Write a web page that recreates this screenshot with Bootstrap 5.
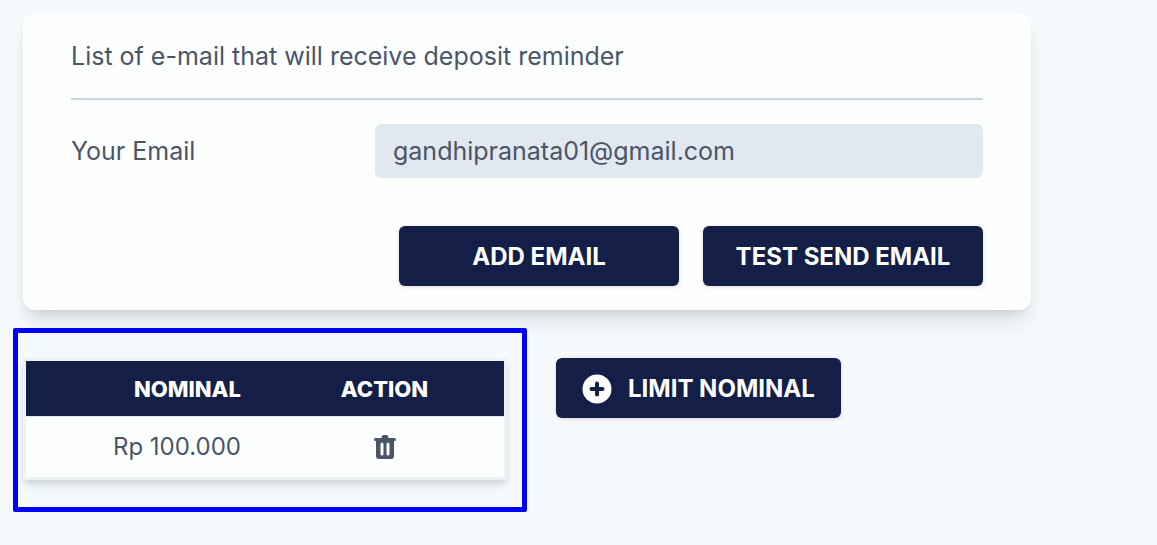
<!DOCTYPE html>
<html lang="en">
<head>
<meta charset="utf-8">
<meta name="viewport" content="width=device-width, initial-scale=1">
<title>Deposit reminder</title>
<link href="https://cdn.jsdelivr.net/npm/bootstrap@5.3.0/dist/css/bootstrap.min.css" rel="stylesheet">
<style>
  :root { --navy: #131f47; --slate: #4a5568; }
  body { background: #f7fafc; color: var(--slate); font-family: Inter, sans-serif; font-size: 25px; line-height: 36px; }
  .page-main { max-width: 1031px; padding: 14px 0 32px 23px; }
  .panel { background: #fdfffe; border-radius: 12px; padding: 24px 48px; box-shadow: 0 15px 22px -5px rgba(0,0,0,.12), 0 6px 9px -3px rgba(0,0,0,.08); }
  .panel-title { font-size: 25px; line-height: 36px; font-weight: 400; padding-bottom: 24px; border-bottom: 2px solid #cbd5e0; }
  .email-box { background: #e2e8f0; border: 0; border-radius: 6px; padding: 9px 18px; color: var(--slate); font-size: 25px; line-height: 36px; }
  .email-box:focus { background: #e2e8f0; color: var(--slate); }
  .btn-navy { --bs-btn-color: #fff; --bs-btn-bg: var(--navy); --bs-btn-hover-color: #fff; --bs-btn-hover-bg: #222f63; --bs-btn-active-color: #fff; --bs-btn-active-bg: #0d1533;
    border: 0; border-radius: 6px; padding: 13px 26px 11px; font-size: 24px; line-height: 36px; font-weight: 700; box-shadow: 0 1px 4px rgba(0,0,0,.15); }
  .lower-area { margin-top: 48px; gap: 49px; }
  .table-frame { width: 484px; border: 3px solid #edf2f7; box-shadow: 0 6px 9px -1px rgba(0,0,0,.12), 0 3px 6px -1px rgba(0,0,0,.06); }
  .nominal-table { table-layout: fixed; border-collapse: separate; border-spacing: 0; color: var(--slate); background: #fdfffe; }
  .nominal-table th { height: 56px; background: var(--navy); color: #fff; font-size: 22px; line-height: 36px; font-weight: 800; padding: 9px 24px; border-bottom: 1px solid #e2e8f0; }
  .nominal-table td { padding: 12px 24px; height: 60px; font-size: 24px; line-height: 36px; }
  .focus-outline { inset: -33px -23px -35px -13px; border: 5px solid #00f; border-radius: 2px; pointer-events: none; }
  .icon-btn { color: var(--slate); line-height: 0; }
</style>
</head>
<body>
<main class="page-main">
  <section class="panel">
    <h1 class="panel-title mb-4">List of e-mail that will receive deposit reminder</h1>
    <form>
      <div class="row g-0 align-items-center mb-5">
        <label class="col-4" for="email">Your Email</label>
        <div class="col-8"><input id="email" class="form-control email-box" type="email" value="gandhipranata01@gmail.com" readonly></div>
      </div>
      <div class="row g-0 justify-content-end">
        <div class="col-4 ps-4"><button type="button" class="btn btn-navy w-100">ADD EMAIL</button></div>
        <div class="col-4 ps-4"><button type="button" class="btn btn-navy w-100 px-0">TEST SEND EMAIL</button></div>
      </div>
    </form>
  </section>

  <section class="lower-area d-flex align-items-start">
    <div class="table-frame position-relative">
      <table class="nominal-table w-100">
        <thead><tr><th class="text-end" scope="col">NOMINAL</th><th class="text-center" scope="col">ACTION</th></tr></thead>
        <tbody><tr>
          <td class="text-end">Rp 100.000</td>
          <td>
            <div class="d-flex justify-content-center">
              <button type="button" class="btn icon-btn p-0 border-0" aria-label="Delete">
                <svg width="22" height="24" viewBox="0 0 22 24" fill="currentColor" aria-hidden="true"><path fill-rule="evenodd" d="M1.500 3H7.500C7.500 1 8.500 0 10 0h2c1.500 0 2.500 1 2.500 3h6a1.500 1.500 0 0 1 0 3H20v15a3 3 0 0 1-3 3H5a3 3 0 0 1-3-3V6h-.5a1.500 1.500 0 0 1 0-3zM8 7.500A1.500 1.500 0 0 0 6.500 9v10a1.500 1.500 0 0 0 3 0V9A1.500 1.500 0 0 0 8 7.500zm6 0A1.500 1.500 0 0 0 12.500 9v10a1.500 1.500 0 0 0 3 0V9A1.500 1.500 0 0 0 14 7.500z"/></svg>
              </button>
            </div>
          </td>
        </tr></tbody>
      </table>
      <div class="focus-outline position-absolute"></div>
    </div>
    <button type="button" class="btn btn-navy d-flex align-items-center gap-3">
      <svg width="30" height="30" viewBox="0 0 30 30" aria-hidden="true"><circle cx="15" cy="15" r="14.500" fill="#fff"/><path d="M15 9.500v11M9.500 15h11" stroke="#131f47" stroke-width="4" stroke-linecap="round"/></svg>
      LIMIT NOMINAL
    </button>
  </section>
</main>
<script src="https://cdn.jsdelivr.net/npm/bootstrap@5.3.0/dist/js/bootstrap.bundle.min.js"></script>
</body>
</html>
